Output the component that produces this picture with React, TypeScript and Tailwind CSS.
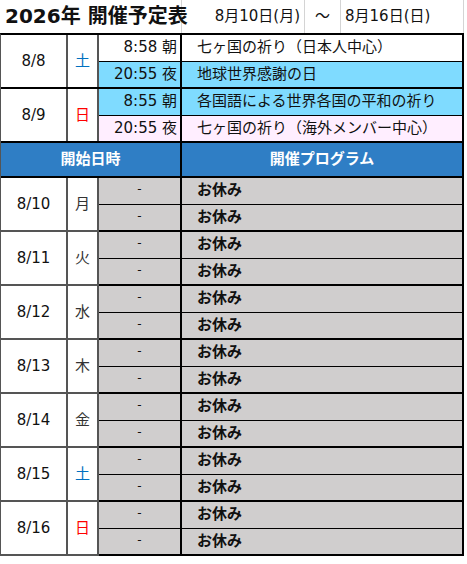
const cyan = 'bg-[#7FDBFF]';
const pink = 'bg-[#FFEEFF]';

const special = [
  {
    date: '8/8',
    day: '土',
    dayColor: 'text-[#0070C0]',
    rows: [
      { time: '8:58 朝', text: '七ヶ国の祈り（日本人中心）', bg: 'bg-white' },
      { time: '20:55 夜', text: '地球世界感謝の日', bg: cyan },
    ],
  },
  {
    date: '8/9',
    day: '日',
    dayColor: 'text-[#FF0000]',
    rows: [
      { time: '8:55 朝', text: '各国語による世界各国の平和の祈り', bg: cyan },
      { time: '20:55 夜', text: '七ヶ国の祈り（海外メンバー中心）', bg: pink },
    ],
  },
];

const week = [
  { date: '8/10', day: '月', dayColor: 'text-[#333]' },
  { date: '8/11', day: '火', dayColor: 'text-[#333]' },
  { date: '8/12', day: '水', dayColor: 'text-[#333]' },
  { date: '8/13', day: '木', dayColor: 'text-[#333]' },
  { date: '8/14', day: '金', dayColor: 'text-[#333]' },
  { date: '8/15', day: '土', dayColor: 'text-[#0070C0]' },
  { date: '8/16', day: '日', dayColor: 'text-[#FF0000]' },
];

function SpecialBlock({ b }: { b: (typeof special)[number] }) {
  return (
    <div className="flex border-b-2 border-black">
      <div className="flex w-[67px] items-center justify-center border-r-2 border-[#555]">{b.date}</div>
      <div className={`flex w-[31px] items-center justify-center border-r-2 border-[#555] ${b.dayColor}`}>{b.day}</div>
      <div className="flex flex-1 flex-col">
        {b.rows.map((r, i) => (
          <div key={i} className={`flex h-[26px] ${r.bg} ${i > 0 ? 'border-t border-black' : ''}`}>
            <div className="w-[83px] border-r-2 border-black pr-[3px] text-right leading-[25px] whitespace-nowrap">{r.time}</div>
            <div className="flex-1 pl-[15px] leading-[25px] whitespace-nowrap">{r.text}</div>
          </div>
        ))}
      </div>
    </div>
  );
}

function WeekBlock({ d }: { d: (typeof week)[number] }) {
  return (
    <div className="flex">
      <div className="flex w-[67px] items-center justify-center border-r-2 border-b-2 border-[#555] bg-white">{d.date}</div>
      <div className={`flex w-[31px] items-center justify-center border-r-2 border-b-2 border-[#555] bg-white ${d.dayColor}`}>{d.day}</div>
      <div className="flex flex-1 flex-col border-b-2 border-black bg-[#D0CECE]">
        {[0, 1].map((i) => (
          <div key={i} className={`flex h-[26px] ${i > 0 ? 'border-t border-black' : ''}`}>
            <div className="w-[83px] border-r-2 border-black text-center text-[12px] leading-[22px]">-</div>
            <div className="flex-1 pl-[15px] font-bold leading-[25px]">お休み</div>
          </div>
        ))}
      </div>
    </div>
  );
}

export default function App() {
  return (
    <div className="min-h-[564px] w-[467px] bg-white font-['DejaVu_Sans','Noto_Sans_CJK_JP',sans-serif] text-[15px] text-[#111]">
      <div className="flex h-[33px] w-[464px]">
        <div className="w-[182px] border-r border-[#D4D4D4] pl-[5px] text-[20px] leading-[33px] font-bold whitespace-nowrap">2026年 開催予定表</div>
        <div className="w-[123px] border-r border-[#D4D4D4] pr-[4px] text-right leading-[33px] whitespace-nowrap">8月10日(月)</div>
        <div className="w-[36px] border-r border-[#D4D4D4] text-center leading-[33px]">～</div>
        <div className="w-[123px] border-r border-[#D4D4D4] pl-[4px] leading-[33px] whitespace-nowrap">8月16日(日)</div>
      </div>
      <div className="w-[464px] border-t-2 border-r-2 border-l border-t-black border-r-black border-l-[#555]">
        {special.map((b) => (
          <SpecialBlock key={b.date} b={b} />
        ))}
        <div className="flex h-[35px] border-b-2 border-black bg-[#2F7EC5] font-bold text-white">
          <div className="w-[181px] border-r-2 border-black text-center leading-[33px]">開始日時</div>
          <div className="flex-1 text-center leading-[33px]">開催プログラム</div>
        </div>
        {week.map((d) => (
          <WeekBlock key={d.date} d={d} />
        ))}
      </div>
    </div>
  );
}
